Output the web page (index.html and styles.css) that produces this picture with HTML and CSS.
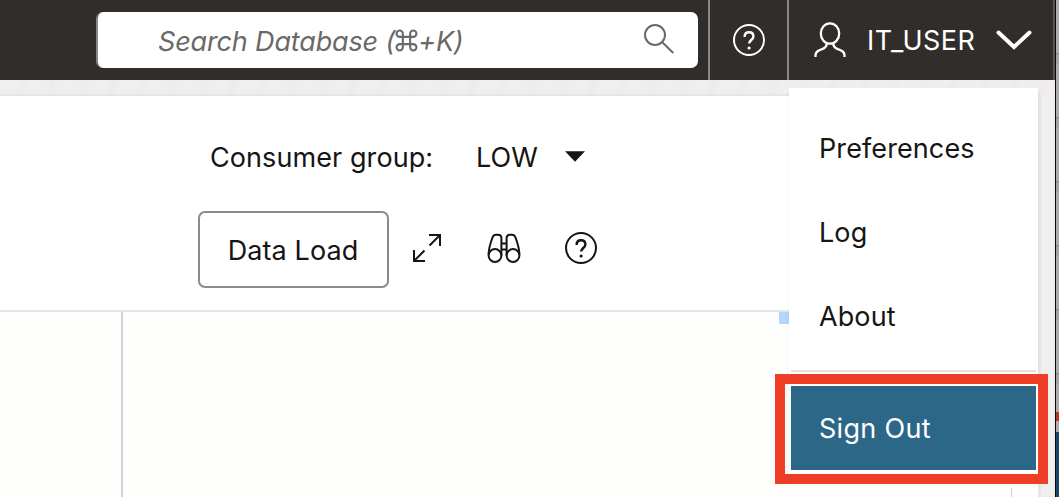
FILE: index.html
```html
<!DOCTYPE html>
<html lang="en">
<head>
<meta charset="utf-8">
<title>Database Actions</title>
<link rel="stylesheet" href="styles.css">
</head>
<body>
<div class="screen">
  <div class="app">
    <header class="header">
      <div class="search">
        <span class="search-text">Search Database (<svg class="cmd" viewBox="0 0 22 22"><path d="M7.5 7.5h7v7h-7zM7.5 7.5h-3a3 3 0 1 1 3-3zM14.5 7.5v-3a3 3 0 1 1 3 3zM14.500 14.500h3a3 3 0 1 1-3 3zM7.500 14.500v3a3 3 0 1 1-3-3z"/></svg>+K)</span>
        <svg class="search-icon" viewBox="0 0 32 32"><circle cx="12" cy="12" r="10"/><path d="M19.300 19.300 30.300 30"/></svg>
      </div>
      <div class="header-help">
        <svg class="help-icon" viewBox="0 0 34 34"><circle cx="17" cy="17" r="15"/><path class="mark" d="M12.600 14c0-3 1.800-4.700 4.400-4.700s4.400 1.600 4.400 4.100c0 3.400-4.300 3.800-4.300 7.200"/><circle class="dot" cx="17.100" cy="25" r="1.600"/></svg>
      </div>
      <div class="header-user">
        <svg class="user-icon" viewBox="0 0 32 36"><ellipse cx="16" cy="11.500" rx="9.200" ry="10.200"/><path d="M12.800 21.300c0 3-1.300 4.200-3.500 5.300l-4 1.700c-2.700 1.200-3.800 2.500-3.800 4.900V35M19.200 21.300c0 3 1.300 4.200 3.500 5.300l4 1.700c2.700 1.200 3.800 2.500 3.800 4.900V35"/></svg>
        <span class="user-name">IT_USER</span>
        <svg class="chevron" viewBox="0 0 36 20"><path d="M2.500 2.500 18 17 33.500 2.500"/></svg>
      </div>
    </header>
    <div class="texture"></div>
    <main class="sheet">
      <section class="toolbar">
        <div class="group"><span class="group-label">Consumer group:</span><span class="group-value">LOW</span><svg class="caret" viewBox="0 0 20 11"><path d="M0 .3h20L10 10.800z"/></svg></div>
        <div class="actions">
          <button class="load"><span>Data Load</span></button>
          <svg class="expand" viewBox="0 0 30 30"><path d="M17 2h11v11M27.500 2.500 17.500 12.500M2 17v11h11M2.500 27.500l10-10"/></svg>
          <svg class="binoculars" viewBox="0 0 34 30"><circle cx="8" cy="22.500" r="6.400"/><circle cx="26" cy="22.500" r="6.400"/><path d="M1.600 21.500C1.600 16 4.200 8 5.500 4.500 6.300 2.300 7.100 1.700 9 1.700h1.500c2.400 0 3.900 1.200 3.900 3.400V22.500M32.400 21.500C32.400 16 29.800 8 28.500 4.500 27.700 2.300 26.900 1.700 25 1.700h-1.500c-2.400 0-3.900 1.200-3.900 3.400V22.500M14.400 10.500h5.200M14.400 16.500h5.200"/></svg>
          <svg class="help-icon dark" viewBox="0 0 34 34"><circle cx="17" cy="17" r="15"/><path class="mark" d="M12.600 14c0-3 1.800-4.700 4.400-4.700s4.400 1.600 4.400 4.100c0 3.400-4.300 3.800-4.300 7.200"/><circle class="dot" cx="17.100" cy="25" r="1.600"/></svg>
        </div>
      </section>
      <section class="editor"><div class="gutter"></div><div class="code"><i class="selection"></i><i class="ruler"></i></div></section>
    </main>
  </div>
  <aside class="behind"><i class="accent"></i><i class="panel"></i></aside>
  <nav class="menu">
    <div class="item"><span>Preferences</span></div>
    <div class="item"><span>Log</span></div>
    <div class="item"><span>About</span></div>
    <div class="item active"><span>Sign Out</span></div>
  </nav>
  <div class="highlight"></div>
</div>
</body>
</html>
```
FILE: styles.css
```css
* { box-sizing: border-box; }
body { margin: 0; overflow: hidden; font-family: Inter, "Liberation Sans", sans-serif; font-size: 27px; color: #161513; }
svg { display: block; flex: none; fill: none; stroke: currentColor; stroke-width: 2; }
span { white-space: nowrap; }
.screen { position: relative; display: flex; width: 1059px; height: 497px; overflow: hidden; }
.app { display: flex; flex-direction: column; width: 1055px; background: #f1efed; }
.header { display: flex; align-items: center; height: 80px; padding-left: 96px; background: #312d2a; border-right: 2px solid #5b5550; color: #fff; }
.search { display: flex; align-items: center; justify-content: space-between; width: 602px; height: 56px; margin-right: 10px; padding: 0 23px 0 60px; background: #fff; border-left: 2px solid #8b8782; border-radius: 7px; color: #6b6967; }
.search-text { display: flex; align-items: center; font-style: italic; letter-spacing: -0.15px; padding-top: 2px; }
.cmd { width: 23px; height: 23px; margin-bottom: 1px; }
.search-icon { width: 32px; height: 32px; margin-bottom: 2px; }
.header-help { display: flex; align-items: center; justify-content: center; width: 81px; height: 80px; border-left: 2px solid #8b8782; border-right: 2px solid #8b8782; }
.help-icon { width: 34px; height: 34px; }
.help-icon .mark { stroke-width: 2.400; }
.help-icon .dot { fill: currentColor; stroke: none; }
.header-user { display: flex; align-items: center; padding-left: 25px; }
.user-icon { width: 32px; height: 36px; stroke-width: 2.300; }
.user-name { width: 109px; margin: 0 20px 0 21px; padding-top: 1px; letter-spacing: 0.4px; }
.chevron { width: 36px; height: 20px; stroke-width: 4; stroke-linecap: round; }
.texture { height: 14px; background: repeating-linear-gradient(105deg, #f1efed 0 16px, #eeecea 24px, #f1efed 31px 45px, #edebe9 52px, #f1efed 58px); }
.sheet { display: flex; flex-direction: column; width: 1041px; height: 403px; background: #fff; border-top: 2px solid #e3e6e4; border-right: 3px solid #e6e6e6; }
.toolbar { height: 216px; padding: 42px 0 0 198px; border-bottom: 2px solid #e6e6e6; }
.group { display: flex; align-items: center; height: 38px; padding-left: 12px; }
.group-label { width: 266px; letter-spacing: 0.08px; }
.group-value { width: 89px; }
.caret { width: 20px; height: 11px; fill: currentColor; stroke: none; margin-bottom: 2px; }
.actions { display: flex; align-items: center; margin-top: 35px; }
.load { display: flex; align-items: center; justify-content: center; width: 191px; height: 77px; padding: 2px 1px 0 0; background: #fff; border: 2px solid #8b8b8b; border-radius: 7px; font: inherit; letter-spacing: 0.1px; color: inherit; }
.expand { width: 30px; height: 30px; margin: -3px 45px 0 23px; }
.binoculars { width: 34px; height: 30px; margin: -3px 43px 0 0; }
.dark { margin-top: -3px; }
.editor { display: flex; flex: 1; background: #fefefc; }
.gutter { width: 123px; border-right: 2px solid #d1d1d1; }
.code { position: relative; flex: 1; }
.selection { position: absolute; left: 656px; top: 0; width: 10px; height: 12px; background: #b5d5fd; }
.ruler { position: absolute; left: 888px; bottom: 0; width: 1px; height: 9px; background: #d1d1d1; }
.behind { position: relative; width: 4px; border-left: 1px solid #080808; background: repeating-linear-gradient(#adadad 0 53px, #8e9299 53px 55px, #a4a4a4 55px 64px); background-size: 100% 64px; }
.accent { position: absolute; left: 0; top: 412px; width: 3px; height: 9px; background: #b93422; }
.panel { position: absolute; left: 0; top: 432px; width: 3px; height: 65px; background: #1b4965; }
.menu { position: absolute; left: 789px; top: 88px; display: flex; flex-direction: column; width: 249px; height: 394px; padding: 18px 2px 0; background: #fff; box-shadow: 0 2px 5px rgba(0,0,0,.05); }
.item { display: flex; flex: none; align-items: center; height: 84px; padding: 1px 0 0 28px; letter-spacing: 0.1px; }
.active { margin-top: 28px; padding-top: 0; background: #2c6788; color: #fff; letter-spacing: 0.3px; box-shadow: 0 -14px 0 #fff, 0 -16px 0 #e3e3e1; }
.highlight { position: absolute; left: 775px; top: 374px; width: 273px; height: 110px; border: 10px solid #ee3e26; }
```
